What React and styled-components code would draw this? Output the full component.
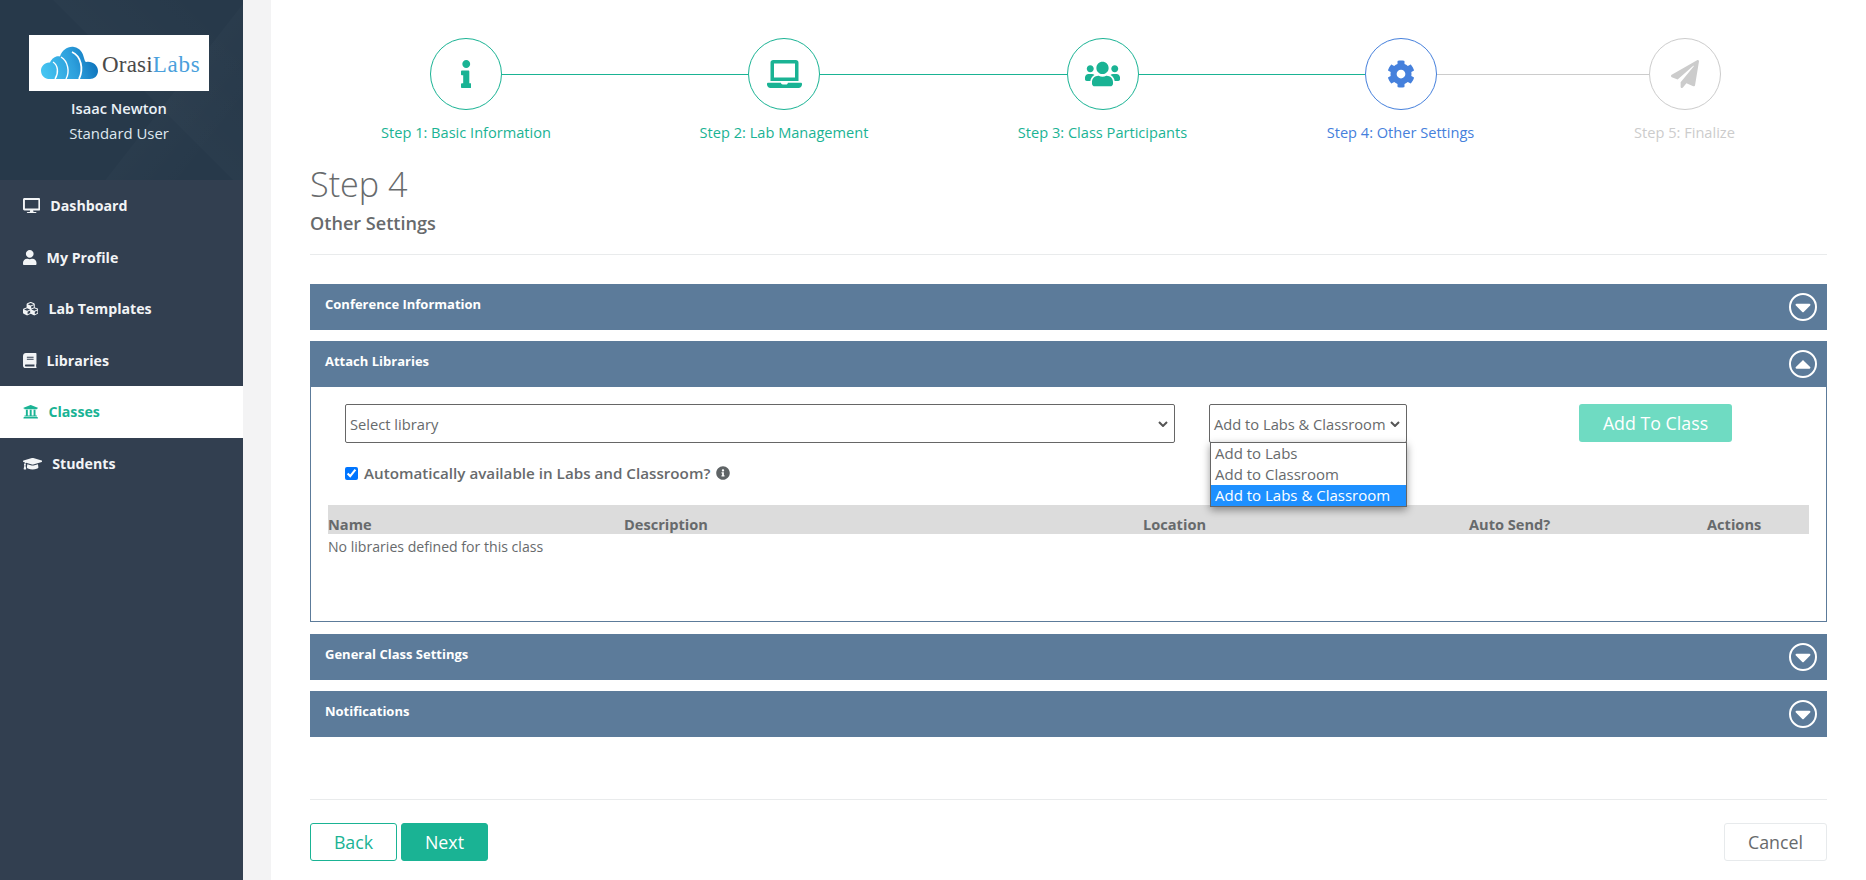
import React from 'react';
import styled, { createGlobalStyle } from 'styled-components';
import {
  FaDesktop,
  FaUser,
  FaCubes,
  FaBook,
  FaUniversity,
  FaGraduationCap,
  FaInfo,
  FaLaptop,
  FaUsers,
  FaCog,
  FaPaperPlane,
  FaInfoCircle,
  FaCaretDown,
  FaCaretUp,
} from 'react-icons/fa';

const TEAL = '#1ab394';
const BLUE = '#4580dc';
const MUTED = '#cccccc';
const PANEL = '#5c7b9a';
const TEXT = '#676a6c';

const GlobalStyle = createGlobalStyle`
  html, body {
    margin: 0;
    padding: 0;
    height: 100%;
    background: #f3f3f4;
  }
  body {
    font-family: "Open Sans", "Liberation Sans", sans-serif;
    font-size: 14.6px;
    color: ${TEXT};
  }
`;

const Shell = styled.div`
  display: flex;
  height: 880px;
  overflow: hidden;
`;

const Sidebar = styled.aside`
  flex: 0 0 243px;
  background: #323f50;
`;

const Profile = styled.div`
  height: 180px;
  box-sizing: border-box;
  padding: 35px 5px 0 0;
  display: flex;
  flex-direction: column;
  align-items: center;
  background:
    linear-gradient(128deg, transparent 64%, rgba(255, 255, 255, 0.014) 64.3%, transparent 86%),
    linear-gradient(45deg, transparent 55%, rgba(255, 255, 255, 0.016) 55.3%, transparent 90%),
    #27394a;
`;

const LogoBox = styled.div`
  width: 180px;
  height: 56px;
  background: #fff;
  display: flex;
  align-items: center;
  padding-left: 12px;
  box-sizing: border-box;
`;

const LogoWord = styled.span`
  font-family: "Liberation Serif", "DejaVu Serif", serif;
  font-size: 23px;
  letter-spacing: 0.2px;
  margin-left: 3px;
  padding-top: 3px;
  color: #4a4a4a;
`;

const LogoAccent = styled.span`
  color: #4a9fdc;
  letter-spacing: 0.7px;
`;

const UserName = styled.div`
  margin-top: 7px;
  line-height: 20px;
  font-size: 14.7px;
  font-weight: 600;
  color: #eaf1f7;
`;

const UserRole = styled.div`
  margin-top: 5px;
  line-height: 20px;
  font-size: 14.9px;
  color: #dfe8ef;
`;

const NavList = styled.nav`
  display: flex;
  flex-direction: column;
`;

const NavItem = styled.a`
  height: 51.5px;
  box-sizing: border-box;
  padding-left: 23px;
  display: flex;
  align-items: center;
  gap: 10px;
  font-size: 14.2px;
  font-weight: 700;
  color: ${(p) => (p.$active ? TEAL : '#f2f4f6')};
  background: ${(p) => (p.$active ? '#fff' : 'transparent')};
`;

const NavIcon = styled.span`
  display: flex;
  flex: none;

  svg {
    width: ${(p) => p.$width}px;
    height: 15.4px;
  }
`;

const Main = styled.main`
  flex: 1;
  margin-left: 28px;
  padding: 38px 39px 0;
  background: #fff;
  min-width: 0;
`;

const Stepper = styled.div`
  display: flex;
`;

const Step = styled.div`
  flex: 0 0 ${(p) => p.$width}px;
  display: flex;
  flex-direction: column;
  align-items: center;
  color: ${(p) => p.$color};
`;

const StepTrack = styled.div`
  align-self: stretch;
  display: flex;
  align-items: center;
`;

const Connector = styled.span`
  flex: 1;
  height: 1px;
  margin-top: 1px;
  background: ${(p) => p.$color || 'transparent'};
`;

const StepCircle = styled.div`
  width: 72px;
  height: 72px;
  box-sizing: border-box;
  flex: none;
  border: 1px solid currentColor;
  border-radius: 50%;
  display: flex;
  align-items: center;
  justify-content: center;

  svg {
    width: ${(p) => p.$iconWidth}px;
    height: 28px;
  }
`;

const StepLabel = styled.div`
  margin-top: 12px;
  line-height: 20px;
  font-size: 14.6px;
`;

const PageTitle = styled.h2`
  margin: 18px 0 0;
  font-size: 34.2px;
  line-height: 48px;
  font-weight: 300;
  color: ${TEXT};
`;

const PageSubtitle = styled.h3`
  margin: 3px 0 0;
  font-size: 18.1px;
  line-height: 24px;
  font-weight: 600;
  color: ${TEXT};
`;

const Rule = styled.div`
  height: 1px;
  background: #e9ebec;
`;

const TitleRule = styled(Rule)`
  margin: 19px 0 29px;
`;

const FooterRule = styled(Rule)`
  margin-top: 62px;
`;

const Panel = styled.section`
  margin-bottom: 11px;
`;

const PanelHeader = styled.div`
  height: 46px;
  box-sizing: border-box;
  padding: 10px 10px 0 15px;
  display: flex;
  justify-content: space-between;
  background: ${PANEL};
  color: #fff;
  font-size: 13px;
  font-weight: 700;
  line-height: 20px;
`;

const Toggle = styled.span`
  width: 28px;
  height: 28px;
  box-sizing: border-box;
  margin-top: -1px;
  border: 2px solid #fff;
  border-radius: 50%;
  display: flex;
  align-items: center;
  justify-content: center;

  svg {
    width: 16px;
    height: 26px;
    flex: none;
  }
`;

const PanelBody = styled.div`
  height: 235px;
  box-sizing: border-box;
  margin-bottom: 12px;
  border: 1px solid ${PANEL};
  border-top: 0;
  padding: 17px 17px 0;
`;

const FormRow = styled.div`
  display: flex;
  align-items: flex-start;
  padding-left: 17px;
`;

const SelectBox = styled.div`
  position: relative;
  flex: 0 0 ${(p) => p.$width}px;
  height: 39px;
  box-sizing: border-box;
  margin-right: ${(p) => p.$gap}px;
  padding: 0 6px 0 4px;
  border: 1px solid #666;
  border-radius: 2px;
  display: flex;
  align-items: center;
  justify-content: space-between;
  font-size: 14.7px;
  white-space: nowrap;
`;

const Chevron = styled.svg`
  width: 10px;
  height: 6px;
  flex: none;
`;

const OptionList = styled.ul`
  position: absolute;
  z-index: 2;
  top: 100%;
  left: 0;
  right: -1px;
  margin: 0;
  padding: 0;
  list-style: none;
  background: #fff;
  border: 1px solid #666;
  box-shadow: 0 3px 8px rgba(0, 0, 0, 0.4);
`;

const Option = styled.li`
  height: 21px;
  line-height: 21px;
  padding-left: 4px;
  font-size: 15px;
  background: ${(p) => (p.$selected ? '#1e90ff' : 'transparent')};
  color: ${(p) => (p.$selected ? '#fff' : TEXT)};
`;

const AddButton = styled.button`
  flex: 0 0 153px;
  height: 38px;
  border: 0;
  border-radius: 3px;
  background: #6fdbc2;
  color: #fff;
  font: inherit;
  font-size: 17.8px;
  padding: 0;
`;

const CheckRow = styled.label`
  margin: 22px 0 0 17px;
  display: flex;
  align-items: center;
  height: 16px;
  font-size: 15.2px;
  font-weight: 600;

  input {
    margin: 0 6px 0 0;
    width: 13px;
    height: 13px;
  }

  svg {
    margin-left: 6px;
    width: 14px;
    height: 14px;
    color: #5f6466;
  }
`;

const TableHead = styled.div`
  margin-top: 24px;
  height: 29px;
  display: grid;
  grid-template-columns: 296px 519px 326px 238px 102px;
  align-items: end;
  background: #dcdcdc;
  font-weight: 700;
  line-height: 19px;
`;

const EmptyRow = styled.div`
  line-height: 26px;
  font-size: 14.1px;
`;

const Footer = styled.div`
  margin-top: 23px;
  display: flex;
  gap: 4px;
`;

const ActionButton = styled.button`
  width: ${(p) => p.$width}px;
  height: 38px;
  box-sizing: border-box;
  margin-left: ${(p) => (p.$pushed ? 'auto' : '0')};
  border: 1px solid ${(p) => p.$border};
  border-radius: 3px;
  background: ${(p) => p.$bg};
  color: ${(p) => p.$color};
  font: inherit;
  font-size: 17.8px;
  padding: 0;
`;

const navItems = [
  { label: 'Dashboard', icon: FaDesktop, iconWidth: 17.3 },
  { label: 'My Profile', icon: FaUser, iconWidth: 13.5 },
  { label: 'Lab Templates', icon: FaCubes, iconWidth: 15.4 },
  { label: 'Libraries', icon: FaBook, iconWidth: 13.5 },
  { label: 'Classes', icon: FaUniversity, iconWidth: 15.4, active: true },
  { label: 'Students', icon: FaGraduationCap, iconWidth: 19.25 },
];

const steps = [
  { label: 'Step 1: Basic Information', icon: FaInfo, iconWidth: 10.5, width: 312, color: TEAL, line: TEAL },
  { label: 'Step 2: Lab Management', icon: FaLaptop, iconWidth: 35, width: 324, color: TEAL, line: TEAL },
  { label: 'Step 3: Class Participants', icon: FaUsers, iconWidth: 35, width: 313, color: TEAL, line: TEAL },
  { label: 'Step 4: Other Settings', icon: FaCog, iconWidth: 28, width: 283, color: BLUE, line: MUTED },
  { label: 'Step 5: Finalize', icon: FaPaperPlane, iconWidth: 28, width: 285, color: MUTED },
];

const Logo = () => (
  <svg width="58" height="36" viewBox="0 0 58 36">
    <defs>
      <linearGradient id="cloudFill" x1="0" x2="1" y1="0.6" y2="0.4">
        <stop offset="0" stopColor="#45c4f1" />
        <stop offset="0.55" stopColor="#2d9fdc" />
        <stop offset="1" stopColor="#0b6fb8" />
      </linearGradient>
    </defs>
    <path
      d="M7 34C2 33 0 29 0 25.500C0 21 4 17 9 17.500C11 13 15 10.500 19 11.500C21 5 27 1 33 2C39 3 42 8 43 13C44 16 44 17 45.500 17C51 16 57 20 57 26C57 31 53 34 49 34Z"
      fill="url(#cloudFill)"
    />
    <path d="M12 17c5 3 6 11 2 17" fill="none" stroke="#fff" strokeWidth="1.400" />
    <path d="M20 12c7 4 9 15 5 22" fill="none" stroke="#fff" strokeWidth="1.400" />
    <path d="M31 7c9 4 12 17 7 27" fill="none" stroke="#fff" strokeWidth="1.800" />
  </svg>
);

const ChevronIcon = () => (
  <Chevron viewBox="0 0 10 6">
    <path d="M1 1l4 4 4-4" fill="none" stroke="#555" strokeWidth="2" />
  </Chevron>
);

const AccordionPanel = ({ title, open, children }) => (
  <Panel>
    <PanelHeader>
      <span>{title}</span>
      <Toggle>{open ? <FaCaretUp /> : <FaCaretDown />}</Toggle>
    </PanelHeader>
    {open && <PanelBody>{children}</PanelBody>}
  </Panel>
);

const App = () => (
  <>
    <GlobalStyle />
    <Shell>
      <Sidebar>
        <Profile>
          <LogoBox>
            <Logo />
            <LogoWord>
              Orasi<LogoAccent>Labs</LogoAccent>
            </LogoWord>
          </LogoBox>
          <UserName>Isaac Newton</UserName>
          <UserRole>Standard User</UserRole>
        </Profile>
        <NavList>
          {navItems.map(({ label, icon: Icon, iconWidth, active }) => (
            <NavItem key={label} $active={active}>
              <NavIcon $width={iconWidth}>
                <Icon />
              </NavIcon>
              {label}
            </NavItem>
          ))}
        </NavList>
      </Sidebar>

      <Main>
        <Stepper>
          {steps.map(({ label, icon: Icon, iconWidth, width, color, line }, index) => (
            <Step key={label} $width={width} $color={color}>
              <StepTrack>
                <Connector $color={index > 0 ? steps[index - 1].line : undefined} />
                <StepCircle $iconWidth={iconWidth}>
                  <Icon />
                </StepCircle>
                <Connector $color={line} />
              </StepTrack>
              <StepLabel>{label}</StepLabel>
            </Step>
          ))}
        </Stepper>

        <PageTitle>Step 4</PageTitle>
        <PageSubtitle>Other Settings</PageSubtitle>
        <TitleRule />

        <AccordionPanel title="Conference Information" />
        <AccordionPanel title="Attach Libraries" open>
          <FormRow>
            <SelectBox $width={830} $gap={34}>
              Select library
              <ChevronIcon />
            </SelectBox>
            <SelectBox $width={198} $gap={172}>
              Add to Labs &amp; Classroom
              <ChevronIcon />
              <OptionList>
                <Option>Add to Labs</Option>
                <Option>Add to Classroom</Option>
                <Option $selected>Add to Labs &amp; Classroom</Option>
              </OptionList>
            </SelectBox>
            <AddButton>Add To Class</AddButton>
          </FormRow>
          <CheckRow>
            <input type="checkbox" defaultChecked />
            Automatically available in Labs and Classroom?
            <FaInfoCircle />
          </CheckRow>
          <TableHead>
            <span>Name</span>
            <span>Description</span>
            <span>Location</span>
            <span>Auto Send?</span>
            <span>Actions</span>
          </TableHead>
          <EmptyRow>No libraries defined for this class</EmptyRow>
        </AccordionPanel>
        <AccordionPanel title="General Class Settings" />
        <AccordionPanel title="Notifications" />

        <FooterRule />
        <Footer>
          <ActionButton $width={87} $border={TEAL} $bg="#fff" $color={TEAL}>
            Back
          </ActionButton>
          <ActionButton $width={87} $border={TEAL} $bg={TEAL} $color="#fff">
            Next
          </ActionButton>
          <ActionButton $width={103} $border="#e7eaec" $bg="#fff" $color={TEXT} $pushed>
            Cancel
          </ActionButton>
        </Footer>
      </Main>
    </Shell>
  </>
);

export default App;
